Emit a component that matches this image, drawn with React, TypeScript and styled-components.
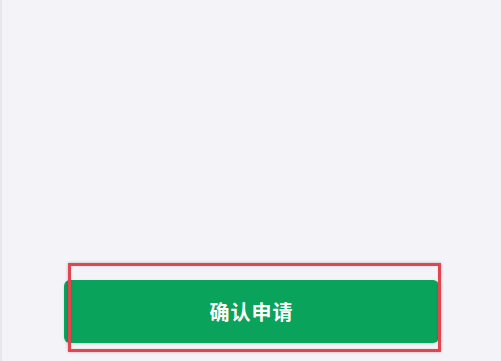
import React from "react";
import styled, { createGlobalStyle } from "styled-components";

const GlobalStyle = createGlobalStyle`
  html, body {
    margin: 0;
    padding: 0;
    background: #f3f3f8;
  }
  #root {
    height: 100vh;
  }
`;

const Page = styled.div`
  height: 100vh;
  display: flex;
  flex-direction: column;
  background: #f3f3f8;
  border-left: 2px solid #e6e6ec;
  box-sizing: border-box;
  font-family: "Noto Sans CJK SC", "Noto Sans", sans-serif;
`;

const Content = styled.div`
  flex: 1;
`;

const Footer = styled.div`
  padding: 0 62px 18px 62px;
`;

const ButtonWrap = styled.div`
  position: relative;
`;

const ConfirmButton = styled.button`
  width: 100%;
  height: 63px;
  border: none;
  border-radius: 6px;
  background: #0aa35b;
  color: #ffffff;
  font-family: "Noto Sans CJK SC", "Noto Sans", sans-serif;
  font-size: 20px;
  font-weight: 700;
  letter-spacing: 1px;
  cursor: pointer;
  box-shadow: 0 1px 3px rgba(0, 0, 0, 0.12);
`;

// red highlight frame drawn over the button (screenshot annotation)
const Highlight = styled.div`
  position: absolute;
  left: 4px;
  top: -17px;
  right: -2px;
  bottom: -9px;
  border: 3px solid #e2454f;
  box-shadow: 0 0 3px rgba(0, 0, 0, 0.25), inset 0 0 2px rgba(0, 0, 0, 0.15);
  pointer-events: none;
`;

export default function App() {
  return (
    <>
      <GlobalStyle />
      <Page>
        <Content />
        <Footer>
          <ButtonWrap>
            <ConfirmButton>确认申请</ConfirmButton>
            <Highlight />
          </ButtonWrap>
        </Footer>
      </Page>
    </>
  );
}
